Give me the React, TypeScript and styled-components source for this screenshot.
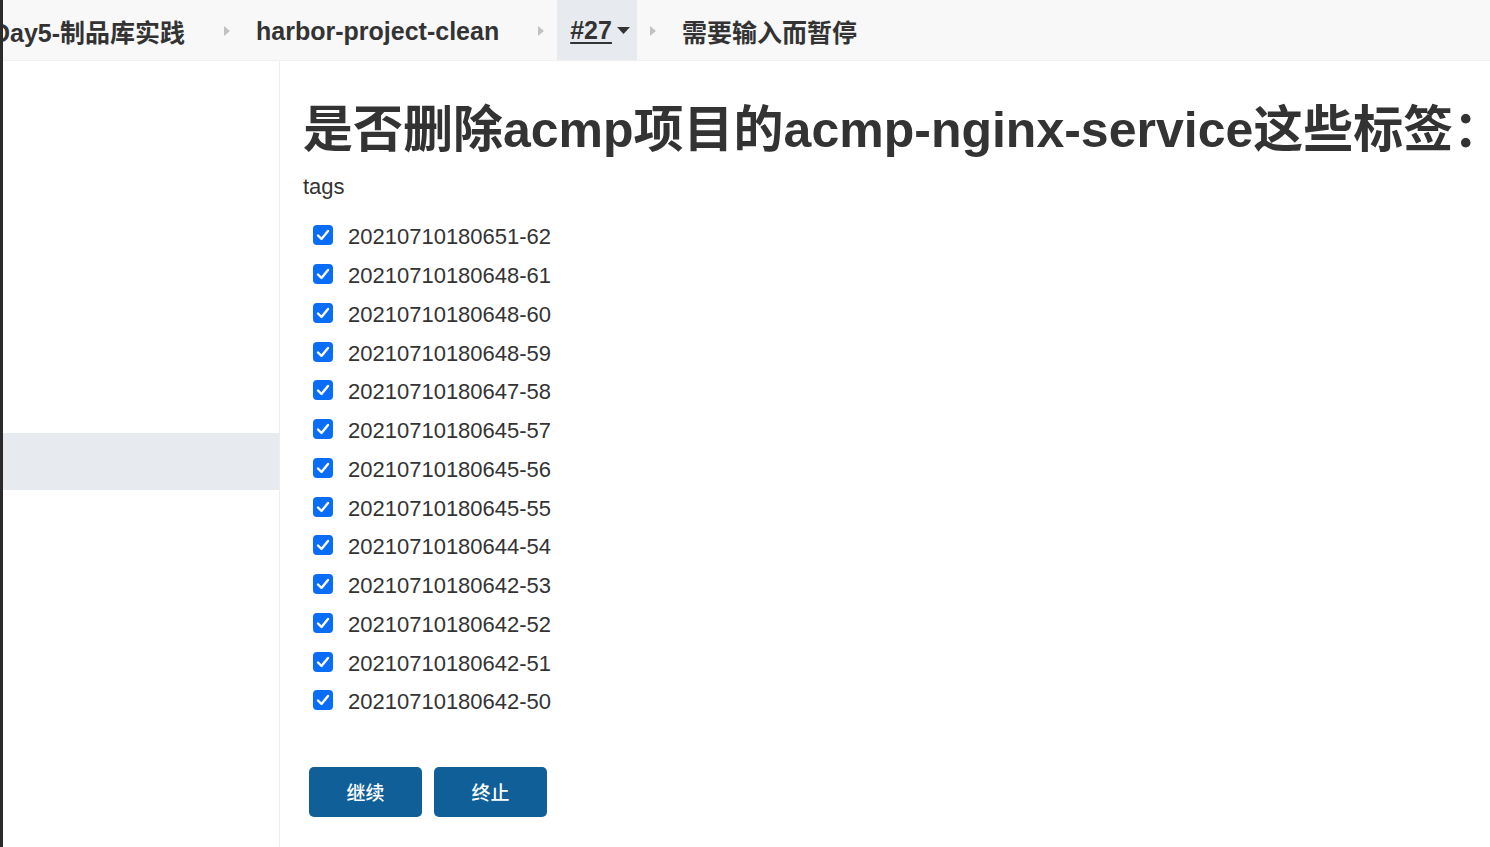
import React from "react";
import styled, { createGlobalStyle } from "styled-components";

const Global = createGlobalStyle`
  html, body { margin: 0; padding: 0; background: #fff; overflow: hidden; }
  body { font-family: "Liberation Sans", "Noto Sans CJK SC", Arial, sans-serif; color: #333; }
  * { box-sizing: border-box; }
`;

const Root = styled.div`
  display: flex;
  width: 1490px;
  height: 847px;
`;

const EdgeBar = styled.div`
  width: 3px;
  flex: 0 0 3px;
  background: #2b2b2b;
`;

const Page = styled.div`
  flex: 1;
  display: flex;
  flex-direction: column;
  min-width: 0;
  overflow: hidden;
`;

const Header = styled.nav`
  height: 61px;
  flex: 0 0 61px;
  background: #f8f8f8;
  display: flex;
  align-items: stretch;
  overflow: hidden;
  white-space: nowrap;
  border-bottom: 1px solid #f0f0f0;
  padding-top: 2px;
`;

const Crumb = styled.div<{ $first?: boolean; $active?: boolean }>`
  display: flex;
  align-items: center;
  padding: 0 ${(p) => (p.$active ? "7px" : "26px")} 0 13px;
  margin-left: ${(p) => (p.$first ? "-24px" : "0")};
  margin-top: ${(p) => (p.$active ? "-2px" : "0")};
  font-size: 25px;
  font-weight: bold;
  color: #333;
  background: ${(p) => (p.$active ? "#e7ebef" : "transparent")};
  gap: 5px;
`;

const CrumbLink = styled.span`
  text-decoration: underline;
  text-decoration-thickness: 2px;
  text-underline-offset: 3px;
`;

const Sep = styled.div`
  display: flex;
  align-items: center;
  padding: 0 13px;
`;

const Body = styled.div`
  flex: 1;
  display: flex;
  min-height: 0;
`;

const Sidebar = styled.aside`
  width: 277px;
  flex: 0 0 277px;
  border-right: 1px solid #eceef0;
  display: flex;
  flex-direction: column;
  padding-top: 372px;
`;

const SideRow = styled.div<{ $active?: boolean }>`
  height: 57px;
  background: ${(p) => (p.$active ? "#e7ebef" : "transparent")};
`;

const Main = styled.main`
  flex: 1;
  padding: 34px 0 0 23px;
  min-width: 0;
`;

const Title = styled.h1`
  margin: 0;
  font-size: 50px;
  line-height: 70px;
  font-weight: bold;
  color: #333;
  white-space: nowrap;
`;

const Label = styled.div`
  font-size: 22px;
  line-height: 28px;
  margin-top: 8px;
  color: #333;
`;

const List = styled.div`
  display: grid;
  grid-auto-rows: 38.75px;
  margin-top: 17px;
  padding-left: 10px;
`;

const Row = styled.label`
  display: flex;
  align-items: center;
  gap: 15px;
  font-size: 22px;
  color: #333;
`;

const Box = styled.span`
  width: 20px;
  height: 20px;
  border-radius: 4px;
  background: #0a6df7;
  display: flex;
  align-items: center;
  justify-content: center;
  margin-top: -4px;
`;

const Actions = styled.div`
  display: flex;
  gap: 12px;
  margin-top: 45px;
  padding-left: 6px;
`;

const Button = styled.button`
  width: 113px;
  height: 50px;
  border: none;
  border-radius: 5px;
  background: #105f98;
  color: #fff;
  font-family: "Noto Sans CJK SC", sans-serif;
  font-size: 19px;
  font-weight: 500;
  cursor: pointer;
`;

const Arrow = () => (
  <svg width="6" height="10" viewBox="0 0 6 10">
    <path d="M0 0 L6 5 L0 10 Z" fill="#c2c2c2" />
  </svg>
);

const Caret = () => (
  <svg width="13" height="7" viewBox="0 0 13 7">
    <path d="M0 0 L13 0 L6.5 7 Z" fill="#333" />
  </svg>
);

const Check = () => (
  <svg width="14" height="12" viewBox="0 0 14 12">
    <path d="M2 6.5 L5.5 10 L12 2" fill="none" stroke="#fff" strokeWidth="2.4" strokeLinecap="round" strokeLinejoin="round" />
  </svg>
);

const tags = [
  "20210710180651-62",
  "20210710180648-61",
  "20210710180648-60",
  "20210710180648-59",
  "20210710180647-58",
  "20210710180645-57",
  "20210710180645-56",
  "20210710180645-55",
  "20210710180644-54",
  "20210710180642-53",
  "20210710180642-52",
  "20210710180642-51",
  "20210710180642-50",
];

export default function App() {
  return (
    <>
      <Global />
      <Root>
        <EdgeBar />
        <Page>
          <Header>
            <Crumb $first>Day5-制品库实践</Crumb>
            <Sep><Arrow /></Sep>
            <Crumb>harbor-project-clean</Crumb>
            <Sep><Arrow /></Sep>
            <Crumb $active>
              <CrumbLink>#27</CrumbLink>
              <Caret />
            </Crumb>
            <Sep><Arrow /></Sep>
            <Crumb>需要输入而暂停</Crumb>
          </Header>
          <Body>
            <Sidebar>
              <SideRow $active />
            </Sidebar>
            <Main>
              <Title>是否删除acmp项目的acmp-nginx-service这些标签：</Title>
              <Label>tags</Label>
              <List>
                {tags.map((t) => (
                  <Row key={t}>
                    <Box><Check /></Box>
                    {t}
                  </Row>
                ))}
              </List>
              <Actions>
                <Button>继续</Button>
                <Button>终止</Button>
              </Actions>
            </Main>
          </Body>
        </Page>
      </Root>
    </>
  );
}
